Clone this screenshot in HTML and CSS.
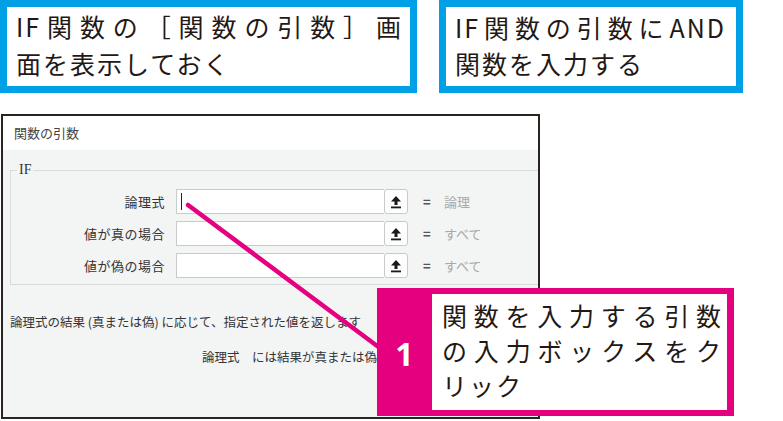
FILE: index.html
```html
<!DOCTYPE html>
<html lang="ja">
<head>
<meta charset="utf-8">
<link rel="stylesheet" href="styles.css">
</head>
<body>
<div class="page">
  <div class="notes">
    <div class="note note1"><span class="jl">IF関数の［関数の引数］画</span><span class="ln">面を表示しておく</span></div>
    <div class="note note2"><span class="jl">IF関数の引数にAND</span><span class="ln">関数を入力する</span></div>
  </div>

  <div class="dialog">
    <div class="titlebar">関数の引数</div>
    <div class="dbody">
      <fieldset class="group">
        <legend>IF</legend>
        <div class="row">
          <span class="lbl">論理式</span>
          <div class="field"><span class="inbox"><span class="caret"></span></span><span class="refbtn"><svg width="12" height="14" viewBox="0 0 12 14"><path d="M6 1 L11 6.5 L7.5 6.5 L7.5 10 L4.5 10 L4.5 6.5 L1 6.5 Z" fill="#1a1a1a"/><rect x="1" y="11.5" width="10" height="1.8" fill="#1a1a1a"/></svg></span></div>
          <span class="eq">=</span><span class="val">論理</span>
        </div>
        <div class="row">
          <span class="lbl">値が真の場合</span>
          <div class="field"><span class="inbox"></span><span class="refbtn"><svg width="12" height="14" viewBox="0 0 12 14"><path d="M6 1 L11 6.5 L7.5 6.5 L7.5 10 L4.5 10 L4.5 6.5 L1 6.5 Z" fill="#1a1a1a"/><rect x="1" y="11.5" width="10" height="1.8" fill="#1a1a1a"/></svg></span></div>
          <span class="eq">=</span><span class="val">すべて</span>
        </div>
        <div class="row">
          <span class="lbl">値が偽の場合</span>
          <div class="field"><span class="inbox"></span><span class="refbtn"><svg width="12" height="14" viewBox="0 0 12 14"><path d="M6 1 L11 6.5 L7.5 6.5 L7.5 10 L4.5 10 L4.5 6.5 L1 6.5 Z" fill="#1a1a1a"/><rect x="1" y="11.5" width="10" height="1.8" fill="#1a1a1a"/></svg></span></div>
          <span class="eq">=</span><span class="val">すべて</span>
        </div>
      </fieldset>
      <p class="desc">論理式の結果 (真または偽) に応じて、指定された値を返します</p>
      <p class="desc2">論理式　には結果が真または偽</p>
    </div>
  </div>

  <svg class="pointer" width="783" height="421" viewBox="0 0 783 421">
    <line x1="188" y1="205" x2="400" y2="363" stroke="#e4007f" stroke-width="4.5" stroke-linecap="round"/>
  </svg>

  <div class="callout">
    <div class="num">1</div>
    <div class="ctext"><span class="jl">関数を入力する引数</span><span class="jl">の入力ボックスをク</span><span class="ln">リック</span></div>
  </div>
</div>
</body>
</html>
```

FILE: styles.css
```css
* { box-sizing: border-box; }
html, body { margin: 0; padding: 0; background: #fff; }
.page {
  position: relative;
  width: 783px;
  height: 421px;
  overflow: hidden;
  font-family: "Noto Sans CJK JP", "Noto Sans", sans-serif;
  color: #231815;
}

/* top notes */
.notes { display: flex; gap: 22px; height: 93px; }
.note {
  border: 7px solid #00a0e6;
  background: #fff;
  height: 93px;
  font-size: 25px;
  letter-spacing: 2px;
  line-height: 37px;
  padding: 1px 7px 0 9px;
}
.note1 { width: 417px; }
.note2 { width: 304px; padding-right: 10px; line-height: 36px; padding-top: 2px; }
.jl { display: block; text-align: justify; text-align-last: justify; }
.ln { display: block; white-space: nowrap; }

/* dialog */
.dialog {
  margin: 21px 0 0 1px;
  width: 539px;
  height: 305px;
  border: 2px solid #2a2421;
  background: #f3f4f4;
  overflow: hidden;
  color: #333;
  display: flex;
  flex-direction: column;
}
.titlebar {
  height: 34px;
  line-height: 34px;
  background: #fff;
  padding-left: 11px;
  font-size: 13px;
  color: #444;
}
.dbody { flex: 1; }
.group {
  margin: 12px -4px 0 7px;
  padding: 0 0 6px 0;
  border: 1px solid #dadcdc;
  min-width: 0;
}
.group legend {
  margin-left: 6px;
  padding: 0 2px;
  font-family: "Liberation Serif", serif;
  font-size: 14px;
  line-height: 16px;
  color: #333;
}
.row {
  display: flex;
  align-items: center;
  height: 25px;
  margin-top: 7px;
}
.row:first-of-type { margin-top: 11px; }
.lbl {
  width: 154px;
  text-align: right;
  font-size: 13px;
  letter-spacing: 0.5px;
  color: #333;
}
.field {
  display: flex;
  width: 232px;
  height: 25px;
  margin-left: 11px;
}
.inbox {
  flex: 1;
  background: #fff;
  border: 1px solid #c9caca;
  border-right: none;
  display: flex;
  align-items: center;
}
.caret {
  display: block;
  width: 1px;
  height: 17px;
  margin-left: 4px;
  background: #222;
}
.refbtn {
  width: 24px;
  height: 25px;
  border: 1px solid #c9caca;
  border-radius: 3px;
  background: #fdfdfd;
  display: flex;
  align-items: center;
  justify-content: center;
}
.eq {
  margin-left: 15px;
  width: 21px;
  font-size: 13px;
  color: #555;
  font-weight: bold;
}
.val {
  font-size: 13px;
  color: #a8a9a9;
}
.desc {
  margin: 28px 0 0 7px;
  font-size: 12.5px;
  line-height: 18px;
  white-space: nowrap;
  color: #333;
}
.desc2 {
  margin: 17px 0 0 199px;
  width: 176px;
  overflow: hidden;
  font-size: 12.5px;
  line-height: 18px;
  white-space: nowrap;
  color: #333;
}

/* pointer line (overlay) */
.pointer { position: absolute; left: 0; top: 0; pointer-events: none; }

/* callout (overlay) */
.callout {
  position: absolute;
  left: 377px;
  top: 288px;
  width: 357px;
  height: 128px;
  background: #e4007f;
  display: flex;
  padding: 6px 7px 6px 0;
}
.num {
  width: 55px;
  display: flex;
  align-items: center;
  justify-content: center;
  color: #fff;
  font-family: "Noto Sans", sans-serif;
  font-weight: bold;
  font-size: 32px;
  padding-top: 2px;
}
.ctext {
  flex: 1;
  background: #fff;
  font-size: 25px;
  letter-spacing: 2px;
  line-height: 35px;
  padding: 4px 4px 0 10px;
  color: #231815;
}
```
